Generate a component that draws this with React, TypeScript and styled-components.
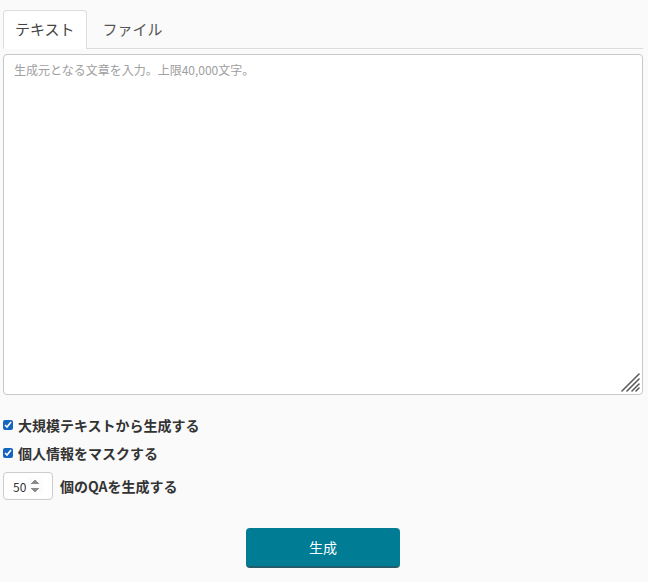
import React, { useState } from "react";
import styled, { createGlobalStyle } from "styled-components";

const Global = createGlobalStyle`
  html, body { margin: 0; padding: 0; background: #fafafa; }
  body { font-family: "Noto Sans CJK JP", "Noto Sans", sans-serif; color: #333; }
`;

const Page = styled.div`
  width: 640px;
  padding: 10px 0 0 3px;
  display: flex;
  flex-direction: column;
`;

const TabBar = styled.div`
  display: flex;
  border-bottom: 1px solid #ddd;
  height: 38px;
`;

const Tab = styled.button<{ $active?: boolean }>`
  font-family: inherit;
  font-size: 15px;
  color: ${(p) => (p.$active ? "#444" : "#555")};
  background: ${(p) => (p.$active ? "#fff" : "transparent")};
  border: 1px solid ${(p) => (p.$active ? "#ddd" : "transparent")};
  border-bottom: none;
  border-radius: 4px 4px 0 0;
  padding: 0 11px 3px;
  margin-bottom: -1px;
  height: 39px;
  cursor: pointer;
  margin-right: 4px;
`;

const Editor = styled.div`
  position: relative;
  margin-top: 5px;
  width: 640px;
  height: 341px;
`;

const TextArea = styled.textarea`
  display: block;
  width: 100%;
  height: 100%;
  box-sizing: border-box;
  border: 1px solid #c8c8c8;
  border-radius: 4px;
  background: #fff;
  padding: 6px 10px;
  font-family: inherit;
  font-size: 12px;
  color: #333;
  resize: none;
  outline: none;
  &::placeholder { color: #a0a0a0; }
`;

const Grip = styled.svg`
  position: absolute;
  right: 2px;
  bottom: 2px;
  width: 21px;
  height: 21px;
  pointer-events: none;
`;

const Options = styled.div`
  margin-top: 16px;
  display: flex;
  flex-direction: column;
`;

const CheckRow = styled.label`
  display: flex;
  align-items: center;
  height: 28px;
  font-size: 14px;
  font-weight: 700;
  color: #333;
  gap: 5px;
`;

const Check = styled.input`
  margin: 0;
  width: 10px;
  height: 10px;
  accent-color: #1565c0;
`;

const CountRow = styled.div`
  display: flex;
  align-items: center;
  gap: 7px;
  margin-top: 5px;
  font-size: 14px;
  font-weight: 700;
`;

const Num = styled.input`
  width: 50px;
  height: 28px;
  box-sizing: border-box;
  border: 1px solid #ccc;
  border-radius: 4px;
  background: #fff;
  padding: 0 9px 0 9px;
  font-family: inherit;
  font-size: 12px;
  color: #333;
  &::-webkit-inner-spin-button { opacity: 1; }
`;

const Actions = styled.div`
  display: flex;
  justify-content: center;
  margin-top: 28px;
`;

const Submit = styled.button`
  width: 154px;
  height: 40px;
  background: #007c95;
  color: #fff;
  border: none;
  border-bottom: 2px solid #235d69;
  border-radius: 4px;
  font-family: inherit;
  font-size: 14px;
  cursor: pointer;
`;

export default function App() {
  const [tab, setTab] = useState(0);
  return (
    <>
      <Global />
      <Page>
        <TabBar>
          <Tab $active={tab === 0} onClick={() => setTab(0)}>テキスト</Tab>
          <Tab $active={tab === 1} onClick={() => setTab(1)}>ファイル</Tab>
        </TabBar>
        <Editor>
          <TextArea placeholder="生成元となる文章を入力。上限40,000文字。" />
          <Grip viewBox="0 0 21 21">
            <g stroke="#5a5a5a" strokeWidth="1.6" strokeLinecap="round">
              <line x1="2" y1="19" x2="19" y2="2" />
              <line x1="7" y1="19" x2="19" y2="7" />
              <line x1="12" y1="19" x2="19" y2="12" />
              <line x1="16" y1="19" x2="19" y2="16" />
            </g>
          </Grip>
        </Editor>
        <Options>
          <CheckRow><Check type="checkbox" defaultChecked />大規模テキストから生成する</CheckRow>
          <CheckRow><Check type="checkbox" defaultChecked />個人情報をマスクする</CheckRow>
          <CountRow><Num type="number" defaultValue={50} />個のQAを生成する</CountRow>
        </Options>
        <Actions>
          <Submit>生成</Submit>
        </Actions>
      </Page>
    </>
  );
}
